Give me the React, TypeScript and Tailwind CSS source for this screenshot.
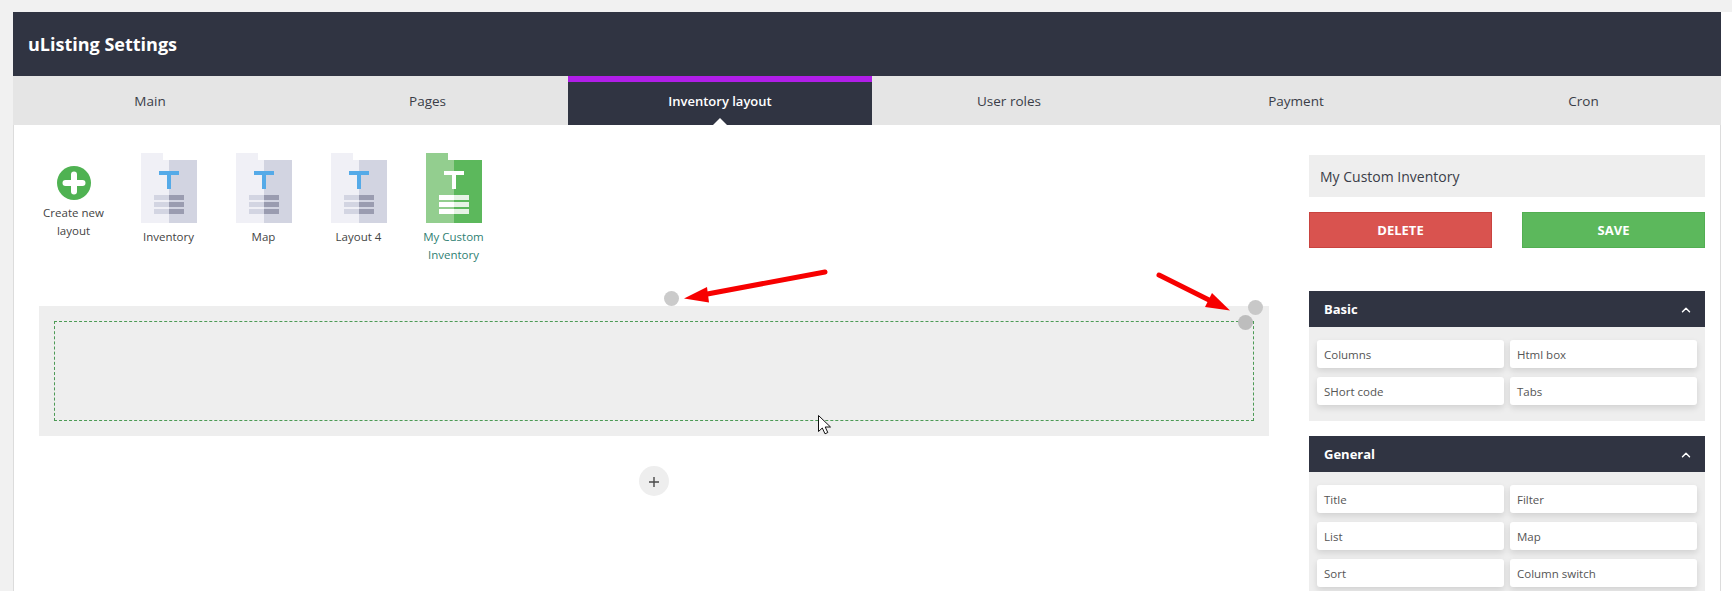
import React from 'react';
import { ChevronUp } from 'lucide-react';

const tabs = ['Main', 'Pages', 'Inventory layout', 'User roles', 'Payment', 'Cron'];

const layouts = [
  { name: 'Inventory', active: false },
  { name: 'Map', active: false },
  { name: 'Layout 4', active: false },
  { name: 'My Custom Inventory', active: true },
];

const groups = [
  { title: 'Basic', items: ['Columns', 'Html box', 'SHort code', 'Tabs'] },
  { title: 'General', items: ['Title', 'Filter', 'List', 'Map', 'Sort', 'Column switch'] },
];

function FileIcon({ active }: { active: boolean }) {
  const left = active ? '#93ce8f' : '#f0f0f6';
  const right = active ? '#5cb85c' : '#d2d4e1';
  const t = active ? '#ffffff' : '#55aae8';
  const lineL = active ? '#ffffff' : '#d3d5e2';
  const lineR = active ? '#e6f3e5' : '#9a9cb0';
  return (
    <svg width="56" height="70" viewBox="0 0 56 70" className="block">
      <path d="M0 0H22V7H28V70H0Z" fill={left} />
      <path d="M28 7H56V70H28Z" fill={right} />
      <path d="M18 18H38V22H30V36H26V22H18Z" fill={t} />
      <rect x="13" y="42" width="15" height="5" fill={lineL} />
      <rect x="13" y="49" width="15" height="5" fill={lineL} />
      <rect x="13" y="56" width="15" height="5" fill={lineL} />
      <rect x="28" y="42" width="15" height="5" fill={lineR} />
      <rect x="28" y="49" width="15" height="5" fill={lineR} />
      <rect x="28" y="56" width="15" height="5" fill={lineR} />
    </svg>
  );
}

function Overlays() {
  return (
    <>
      <span className="absolute left-[664px] top-[291px] h-[15px] w-[15px] rounded-full bg-[#cbcbcb]" />
      <span className="absolute left-[1248px] top-[300px] h-[15px] w-[15px] rounded-full bg-[#c8c8c8]" />
      <span className="absolute left-[1238px] top-[315px] h-[15px] w-[15px] rounded-full bg-[#bdbdbd]" />
      <svg className="absolute left-0 top-0" width="1732" height="591" viewBox="0 0 1732 591" fill="none">
        <path d="M825 272L702 295" stroke="#f70000" strokeWidth="5" strokeLinecap="round" />
        <path d="M684 298.5L707 287L709 302.5Z" fill="#f70000" />
        <path d="M1159 275L1213 302" stroke="#f70000" strokeWidth="5" strokeLinecap="round" />
        <path d="M1230 310.5L1212 293L1205 307Z" fill="#f70000" />
        <path
          d="M818.5 415.5V431.5L822.3 428L825 433.8L827.8 432.5L825.2 427H830.5Z"
          fill="#ffffff"
          stroke="#111111"
          strokeWidth="1"
        />
      </svg>
    </>
  );
}

export default function App() {
  return (
    <div className="relative h-[591px] overflow-hidden bg-[#f1f1f1] pl-[13px] pt-3 font-['Open_Sans',sans-serif]">
      <div className="flex h-[579px]">
        <div className="flex w-[1708px] flex-col">
          <div className="flex h-16 shrink-0 items-center bg-[#303442] pl-[15px] text-lg font-bold text-white">uListing Settings</div>
          <div className="grid h-[49px] shrink-0 grid-cols-[274px_281px_304px_274px_300px_1fr] bg-[#e5e5e5] text-[13.5px] text-[#3a3d48]">
            {tabs.map(tab =>
              tab === 'Inventory layout' ? (
                <div
                  key={tab}
                  className="relative flex items-center justify-center border-t-[6px] border-[#b01ee8] bg-[#303442] pb-1 text-[13px] font-semibold text-white"
                >
                  {tab}
                  <span className="absolute bottom-0 left-1/2 -ml-[7px] h-0 w-0 border-x-[7px] border-b-[7px] border-x-transparent border-b-white" />
                </div>
              ) : (
                <div key={tab} className="flex items-center justify-center pt-[2px]">
                  {tab}
                </div>
              )
            )}
          </div>
          <div className="flex min-h-0 flex-1 gap-10 overflow-hidden border-x border-[#dcdcdc] bg-white pl-[25px] pr-[15px] pt-7">
            <div className="w-[1230px]">
              <div className="-ml-[13px] flex h-[153px] text-[11.5px] leading-[18px] text-[#444]">
                <div className="flex w-[95px] flex-col items-center pt-[13px] text-center">
                  <svg width="34" height="34" viewBox="0 0 34 34" className="mb-1">
                    <circle cx="17" cy="17" r="17" fill="#4fb252" />
                    <path d="M17 8.5V25.5M8.5 17H25.5" stroke="#fff" strokeWidth="6" strokeLinecap="round" />
                  </svg>
                  <span className="w-[80px]">Create new layout</span>
                </div>
                {layouts.map(l => (
                  <div key={l.name} className="flex w-[95px] flex-col items-center text-center">
                    <FileIcon active={l.active} />
                    <span className={l.active ? 'mt-[5px] w-[70px] text-[#2f7f73]' : 'mt-[5px] w-[70px]'}>{l.name}</span>
                  </div>
                ))}
              </div>
              <div className="bg-[#eeeeee] p-[15px]">
                <div className="h-[100px] border border-dashed border-[#4c9a55]" />
              </div>
              <div className="mt-[30px] flex justify-center pr-[1px]">
                <div className="flex h-[30px] w-[30px] items-center justify-center rounded-full bg-[#eeeeee]">
                  <svg width="12" height="12" viewBox="0 0 12 12" className="mt-px">
                    <path d="M6 1V11M1 6H11" stroke="#4a4a4a" strokeWidth="1.4" />
                  </svg>
                </div>
              </div>
            </div>
            <aside className="mt-[2px] w-[396px]">
              <div className="flex h-[42px] items-center bg-[#eeeeee] pl-[11px] pt-px text-sm font-medium text-[#3a3d48]">My Custom Inventory</div>
              <div className="mt-[15px] flex justify-between">
                <button className="h-9 w-[183px] border border-[#c9433f] bg-[#d9534f] pt-px text-[13px] font-bold text-white">DELETE</button>
                <button className="h-9 w-[183px] border border-[#52ae52] bg-[#5cb85c] pt-px text-[13px] font-bold text-white">SAVE</button>
              </div>
              <div className="mt-[43px] flex flex-col gap-[15px]">
                {groups.map(g => (
                  <div key={g.title}>
                    <div className="flex h-9 items-center justify-between bg-[#303442] pl-[15px] pr-[12px] pt-px text-[13px] font-bold text-white">
                      {g.title}
                      <ChevronUp size={14} strokeWidth={2.5} />
                    </div>
                    <div className="grid grid-cols-2 gap-x-[6px] gap-y-[9px] bg-[#eeeeee] px-2 pb-4 pt-[13px]">
                      {g.items.map(item => (
                        <div
                          key={item}
                          className="flex h-7 items-center rounded-[3px] bg-white pl-[7px] pt-px text-[11.5px] text-[#555] shadow-[0_3px_6px_rgba(0,0,0,0.12)]"
                        >
                          {item}
                        </div>
                      ))}
                    </div>
                  </div>
                ))}
              </div>
            </aside>
          </div>
        </div>
        <div className="flex-1 bg-white" />
      </div>
      <Overlays />
    </div>
  );
}
